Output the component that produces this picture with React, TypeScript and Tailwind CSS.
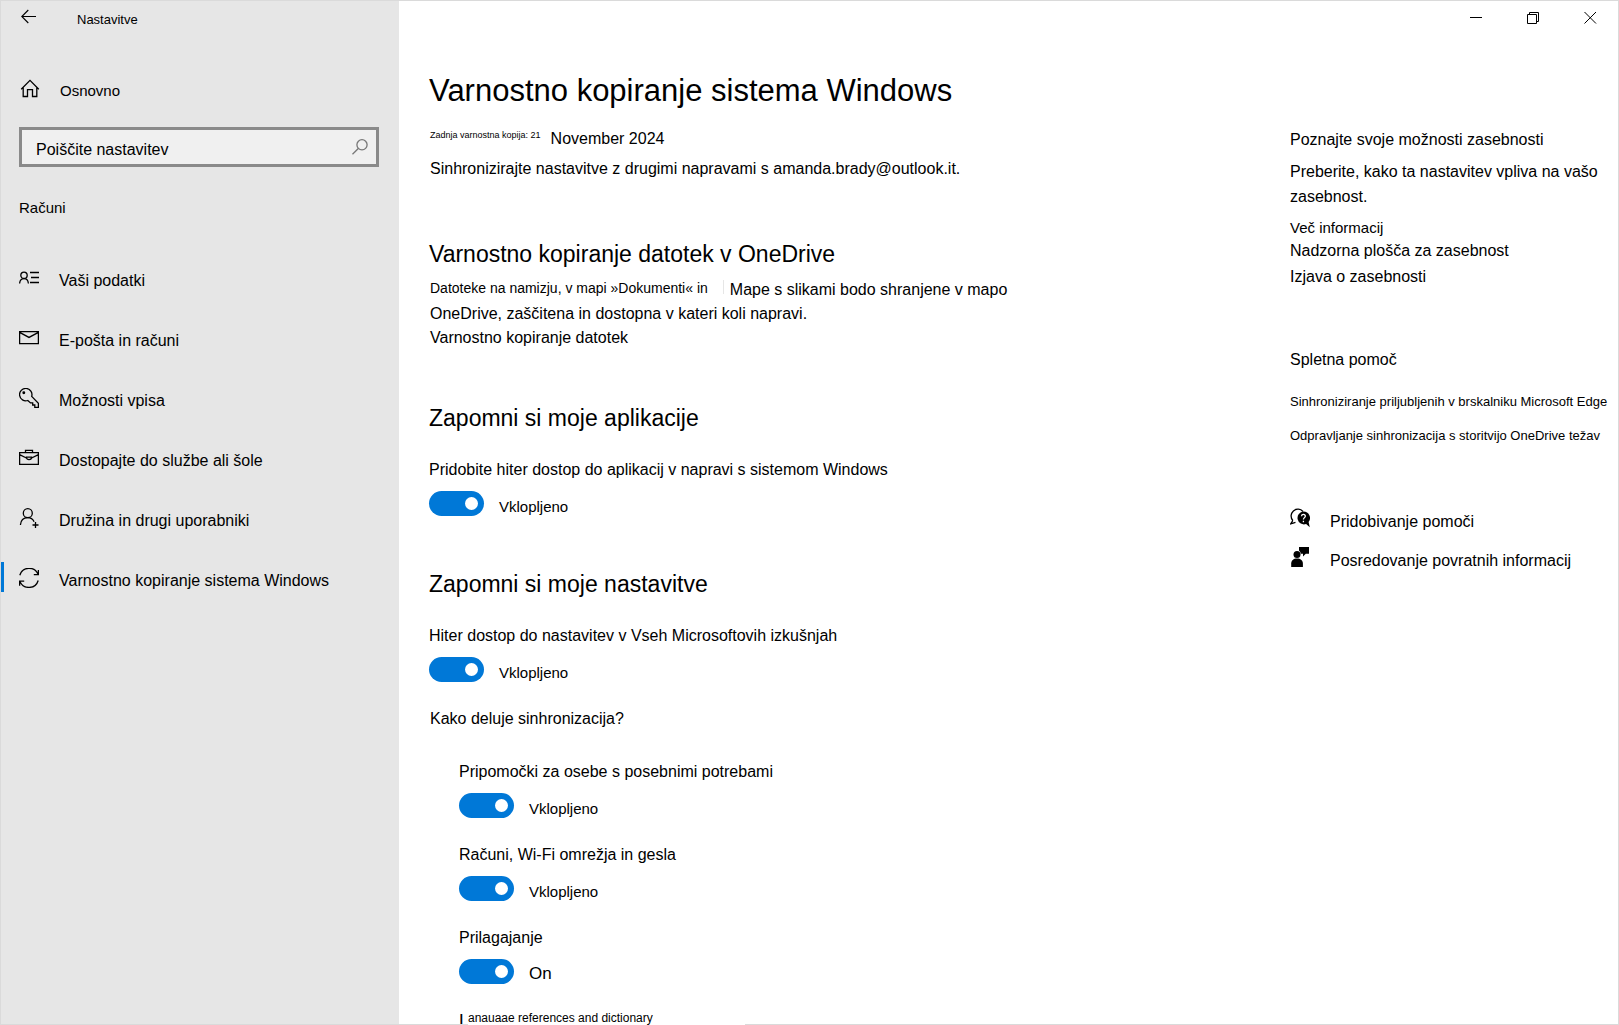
import { useState, type ReactNode } from 'react';

const stroke = {
  fill: 'none',
  stroke: 'currentColor',
  strokeWidth: 1.3,
} as const;

function Icon({ children, className = 'size-5' }: { children: ReactNode; className?: string }) {
  return (
    <svg viewBox="0 0 20 20" className={`shrink-0 ${className}`} aria-hidden="true" {...stroke}>
      {children}
    </svg>
  );
}

const icons = {
  info: (
    <Icon>
      <circle cx="5" cy="7.3" r="3.2" />
      <path d="M.6 15.500c.3-3 2-4.800 4.400-4.800s4.100 1.800 4.400 4.800M11 4.500h9M12 9.500h8M11 14.500h9" />
    </Icon>
  ),
  mail: (
    <Icon>
      <path d="M.6 3.600h18.800v12H.6zM.6 4.400l9.400 5 9.400-5" />
    </Icon>
  ),
  key: (
    <Icon>
      <path d="M8.800 12.500A6.200 6.200 0 1 1 12.700 8.400L19.400 15.200v4.100h-3.600v-2.300h-2.100v-2.100h-2.200l-2.700-2.400z" />
      <circle cx="4.800" cy="4.800" r=".8" fill="currentColor" />
    </Icon>
  ),
  briefcase: (
    <Icon>
      <path d="M.6 4.600h18.800v11.800H.6zM6.500 4.600V2.300h7v2.300M.6 6.600l6.800 3.400M19.400 6.600l-6.800 3.400" />
      <path d="M7.400 9.200h5.200c0 3.200-5.200 3.200-5.200 0z" />
    </Icon>
  ),
  family: (
    <Icon>
      <circle cx="8.800" cy="5.200" r="4.500" />
      <path d="M1.400 17c.4-4.500 3.300-7.300 7.300-7.300 3 0 5.200 1.500 6.400 4M16.500 14v6M13.500 17h6" />
    </Icon>
  ),
  sync: (
    <Icon>
      <path d="M.8 7.200C3.500-1.800 15.500-1.800 19 6M19.400 2v4.600h-4.600M19.200 12.500C16.500 21.500 4.500 21.500 1 13.700M.6 17.700v-4.600h4.600" />
    </Icon>
  ),
};

const navItems = [
  { label: 'Vaši podatki', icon: icons.info },
  { label: 'E-pošta in računi', icon: icons.mail },
  { label: 'Možnosti vpisa', icon: icons.key },
  { label: 'Dostopajte do službe ali šole', icon: icons.briefcase },
  { label: 'Družina in drugi uporabniki', icon: icons.family },
  { label: 'Varnostno kopiranje sistema Windows', icon: icons.sync, active: true },
];

const syncOptions = [
  { id: 'accessibility', label: 'Pripomočki za osebe s posebnimi potrebami', state: 'Vklopljeno' },
  { id: 'accounts', label: 'Računi, Wi-Fi omrežja in gesla', state: 'Vklopljeno' },
  { id: 'personalization', label: 'Prilagajanje', state: 'On', large: true },
];

interface ToggleProps {
  id: string;
  label: string;
  state: string;
  large?: boolean;
}

function Toggle({ id, label, state, large }: ToggleProps) {
  const [on, setOn] = useState(true);

  return (
    <div>
      <label htmlFor={id} className="block">{label}</label>
      <div className="mt-[9px] flex h-7 items-start gap-[15px]">
        <input
          id={id}
          type="checkbox"
          role="switch"
          checked={on}
          onChange={(e) => setOn(e.target.checked)}
          className="flex h-[25px] w-[55px] shrink-0 appearance-none items-center rounded-full bg-gray-400 px-1.5 before:size-[13px] before:rounded-full before:bg-white checked:justify-end checked:bg-[#0078d7]"
        />
        <span className={large ? 'pt-[3px] text-[17px] leading-6' : 'pt-1 text-[15px] leading-6'}>
          {state}
        </span>
      </div>
    </div>
  );
}

function Sidebar() {
  return (
    <aside className="flex w-[398px] shrink-0 flex-col border-b border-[#dadada] bg-[#e6e6e6]">
      <header className="flex h-[30px] items-start">
        <button type="button" aria-label="Nazaj" className="pt-2 pl-5">
          <svg
            viewBox="0 0 16 16"
            className="size-4"
            aria-hidden="true"
            fill="none"
            stroke="currentColor"
            strokeWidth="1.1"
          >
            <path d="M15 7.500H.8M7.300 1L.8 7.500 7.300 14" />
          </svg>
        </button>
        <span className="pt-[9px] pl-10 text-[13px] leading-5">Nastavitve</span>
      </header>

      <a href="#home" className="mt-12 flex items-start gap-5 pl-[19px] text-[15px] leading-6">
        <Icon>
          <path d="M1.200 10.200L10 1.400l8.800 8.800M3.200 8.300v9.200h4.300v-6.800h5v6.800h4.300V8.300" />
        </Icon>
        Osnovno
      </a>

      <div className="mr-5 ml-[18px] mt-6 flex h-10 items-center border-3 border-[#8a8a8a] bg-[#f0f0f0] pr-2">
        <input
          type="search"
          aria-label="Poiščite nastavitev"
          placeholder="Poiščite nastavitev"
          className="min-w-0 flex-1 pt-1.5 pl-3.5 text-base leading-6 outline-none placeholder:text-black"
        />
        <svg viewBox="0 0 16 16" className="size-4 shrink-0 text-[#777]" aria-hidden="true" {...stroke}>
          <circle cx="10" cy="5.800" r="5.100" />
          <path d="M6.300 9.500L.5 15.300" />
        </svg>
      </div>

      <h2 className="mt-[29px] pl-[18px] text-[15px] leading-6">Računi</h2>

      <nav className="mt-[30px]">
        {navItems.map((item) => (
          <a key={item.label} href="#" className="flex h-[60px] items-center">
            <span className={`mb-1.5 h-[30px] w-[3px] ${item.active ? 'bg-[#0078d7]' : ''}`} />
            <span className="mb-[5px] ml-[15px]">{item.icon}</span>
            <span className="ml-5 pt-0.5">{item.label}</span>
          </a>
        ))}
      </nav>
    </aside>
  );
}

function WindowControls() {
  return (
    <div className="flex justify-end">
      <button type="button" aria-label="Minimiraj" className="flex h-[33px] w-[57px] items-center justify-center">
        <svg viewBox="0 0 14 14" className="size-3.5" stroke="#000" fill="none">
          <path d="M1 6.500h12" />
        </svg>
      </button>
      <button type="button" aria-label="Obnovi" className="flex h-[33px] w-[57px] items-center justify-center">
        <svg viewBox="0 0 14 14" className="size-3.5" stroke="#000" fill="none">
          <path d="M1.500 3.500h9v9h-9zM3.500 3.500v-2h9v9h-2" />
        </svg>
      </button>
      <button type="button" aria-label="Zapri" className="flex h-[33px] w-[57px] items-center justify-center">
        <svg viewBox="0 0 14 14" className="size-3.5" stroke="#000" fill="none">
          <path d="M1.500 1l11.500 11.500M13 1L1.500 12.500" />
        </svg>
      </button>
    </div>
  );
}

function HelpPanel() {
  return (
    <aside className="w-[328px] shrink-0 pt-[94px]">
      <h3>Poznajte svoje možnosti zasebnosti</h3>
      <p className="mt-[7px] leading-[25px]">Preberite, kako ta nastavitev vpliva na vašo zasebnost.</p>
      <a href="#" className="mt-2 block text-[15px] leading-[22px]">Več informacij</a>
      <a href="#" className="mt-px block leading-[22px]">Nadzorna plošča za zasebnost</a>
      <a href="#" className="mt-1 block leading-[22px]">Izjava o zasebnosti</a>

      <h3 className="mt-[60px]">Spletna pomoč</h3>
      <div className="mt-5 flex flex-col gap-3.5 text-[13px] leading-5">
        <a href="#">Sinhroniziranje priljubljenih v brskalniku Microsoft Edge</a>
        <a href="#">Odpravljanje sinhronizacija s storitvijo OneDrive težav</a>
      </div>

      <div className="mt-[62px] flex flex-col gap-[13px]">
        <a href="#" className="flex items-start gap-5">
          <Icon>
            <path d="M2.800 12.500A6.500 6.500 0 1 1 13 3.500M2.800 12.500L.8 15.800l4.700-1.500" />
            <path
              d="M13.500 3.600a6.400 6.400 0 1 0 2.600 12.400l3.700 3.300-1.200-5.300A6.400 6.400 0 0 0 13.500 3.600z"
              fill="currentColor"
              stroke="none"
            />
            <path d="M11.500 8.300c.2-2.600 4.100-2.300 3.800 0-.2 1.300-1.900 1.500-1.900 3.200M13.400 12.700v1.500" stroke="#fff" />
          </Icon>
          <span className="pt-0.5">Pridobivanje pomoči</span>
        </a>
        <a href="#" className="flex items-start gap-5">
          <Icon>
            <g fill="currentColor" stroke="none">
              <path d="M9 0h10v6.800h-3.200L13 9.500V6.800h-2.200A4.500 4.500 0 0 0 9 3.500z" />
              <circle cx="7" cy="7.500" r="3.500" />
              <path d="M1.200 20v-3.500c0-3 2.300-5 5.800-5s5.900 2 5.900 5V20z" />
            </g>
          </Icon>
          <span className="pt-0.5">Posredovanje povratnih informacij</span>
        </a>
      </div>
    </aside>
  );
}

export default function App() {
  return (
    <div className="flex min-h-screen border-x border-t border-[#dadada] bg-white font-['Liberation_Sans',Arial,sans-serif] text-base leading-6 text-black">
      <Sidebar />
      <main className="flex min-w-0 flex-1 flex-col">
        <WindowControls />
        <div className="flex flex-1">
          <div className="min-w-0 flex-1 pt-[37px] pl-[30px]">
            <h1 className="text-[31px] leading-10">Varnostno kopiranje sistema Windows</h1>
            <div className="pl-px">
              <p className="mt-4 flex items-start gap-2.5">
                <span className="text-[9px] leading-4">Zadnja varnostna kopija: 21</span>
                <span>November 2024</span>
              </p>
              <p className="mt-1.5">
                Sinhronizirajte nastavitve z drugimi napravami s amanda.brady@outlook.it.
              </p>
            </div>

            <section className="mt-[57px]">
              <h2 className="text-[23px] leading-8">Varnostno kopiranje datotek v OneDrive</h2>
              <div className="mt-2 pl-px">
                <p className="flex items-start">
                  <span className="text-sm leading-5">Datoteke na namizju, v mapi »Dokumenti« in</span>
                  <span className="mt-0.5 mr-1.5 ml-[15px] h-3.5 w-px bg-[#e6e6e6]" />
                  <span>Mape s slikami bodo shranjene v mapo</span>
                </p>
                <p>OneDrive, zaščitena in dostopna v kateri koli napravi.</p>
                <a href="#" className="block">Varnostno kopiranje datotek</a>
              </div>
            </section>

            <section className="mt-[52px]">
              <h2 className="mb-6 text-[23px] leading-8">Zapomni si moje aplikacije</h2>
              <Toggle
                id="apps"
                label="Pridobite hiter dostop do aplikacij v napravi s sistemom Windows"
                state="Vklopljeno"
              />
            </section>

            <section className="mt-[49px]">
              <h2 className="mb-6 text-[23px] leading-8">Zapomni si moje nastavitve</h2>
              <Toggle
                id="preferences"
                label="Hiter dostop do nastavitev v Vseh Microsoftovih izkušnjah"
                state="Vklopljeno"
              />
              <a href="#" className="mt-[22px] block pl-px">Kako deluje sinhronizacija?</a>
              <div className="mt-[29px] flex flex-col gap-[22px] pl-[30px]">
                {syncOptions.map((option) => (
                  <Toggle key={option.id} {...option} />
                ))}
              </div>
            </section>
          </div>
          <HelpPanel />
        </div>

        {/* next option, cut off by the bottom edge of the window */}
        <div className="flex h-[13px]">
          <div className="w-[69px] shrink-0 overflow-hidden border-b border-[#dadada] pl-[60px] text-lg leading-[18px]">L</div>
          <div className="w-[277px] shrink-0 text-xs leading-[13px]">anauaae references and dictionary</div>
          <div className="flex-1 border-b border-[#dadada]" />
        </div>
      </main>
    </div>
  );
}
